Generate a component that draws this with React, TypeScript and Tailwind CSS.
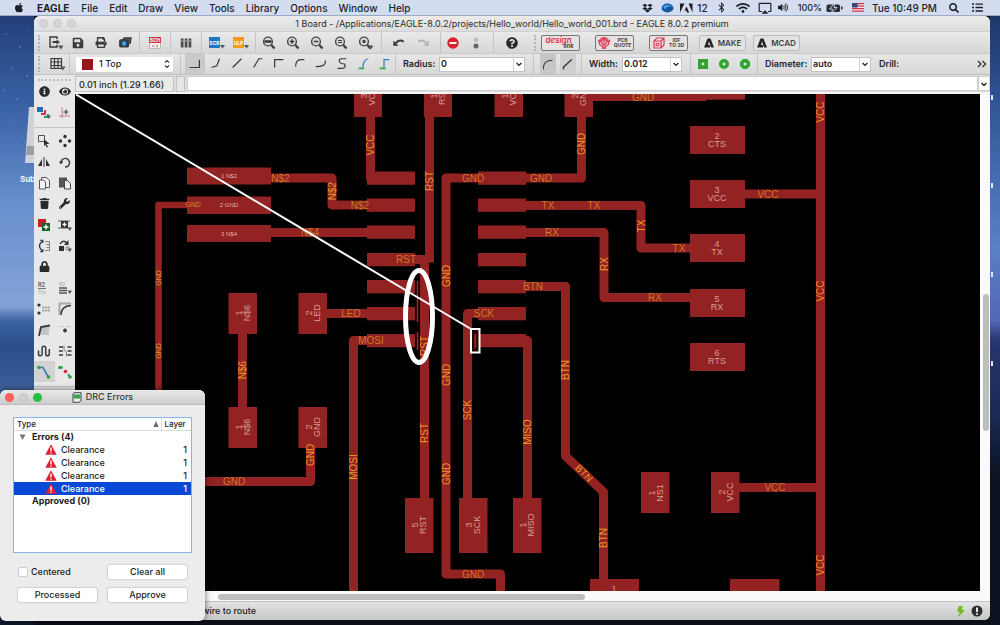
import React from "react";
import {
  FaApple, FaDropbox, FaBluetoothB, FaWifi, FaTrash, FaWrench, FaLock, FaInfoCircle, FaEye,
  FaQuestionCircle, FaPrint, FaVolumeUp, FaSearch, FaBolt, FaListUl, FaSave,
} from "react-icons/fa";
import { MdAirplay } from "react-icons/md";

type Kids = { children?: React.ReactNode };

/* ---------- small drawing helpers ---------- */

function Glyph({ children, size = "w-4 h-4", box = "0 0 16 16" }: Kids & { size?: string; box?: string }) {
  return (
    <svg viewBox={box} className={`${size} shrink-0`} fill="none" stroke="#3a3a3a" strokeWidth="1.4" aria-hidden="true">
      {children}
    </svg>
  );
}

const Drop = () => <path d="M11 10.500h5.500l-2.700 4z" fill="#555" stroke="none" />;

function Tool({ label, children, cell = "w-6" }: Kids & { label: string; cell?: string }) {
  return (
    <button type="button" aria-label={label} className={`${cell} flex h-5 shrink-0 items-center justify-center`}>
      {children}
    </button>
  );
}

function Group({ children, className = "" }: Kids & { className?: string }) {
  return (
    <div className={`flex h-full shrink-0 items-center border-l border-[#c4c4c4] ${className}`}>{children}</div>
  );
}

const Grip = () => (
  <div className="mx-1 h-4 shrink-0 border-l-2 border-dotted border-[#b4b4b4]" />
);

function Magnifier({ children, drop }: Kids & { drop?: boolean }) {
  return (
    <Glyph>
      <circle cx="7" cy="6.5" r="4.4" fill="#d8d8d8" stroke="#4a4a4a" />
      <path d="M10.300 10l3.200 3.400" strokeWidth="2.200" />
      {children}
      {drop && <Drop />}
    </Glyph>
  );
}

function Combo({ id, value, width }: { id: string; value: string; width: string }) {
  return (
    <div className={`${width} relative h-[15px] shrink-0 border border-[#c3c3c3] bg-white`}>
      <select id={id} defaultValue={value} className="block h-full w-full appearance-none bg-transparent pl-px text-[9px] leading-3 text-[#222] outline-none">
        <option>{value}</option>
      </select>
      <span className="pointer-events-none absolute inset-y-0 right-0 flex w-[11px] items-center justify-center border-l border-[#d5d5d5] bg-white">
        <svg viewBox="0 0 8 8" className="h-2 w-2" fill="none" stroke="#222" strokeWidth="1.3"><path d="M1.6 3l2.400 2.400L6.400 3" /></svg>
      </span>
    </div>
  );
}

/* ---------- menu bar ---------- */

const menus = ["File", "Edit", "Draw", "View", "Tools", "Library", "Options", "Window", "Help"];

function MenuBar() {
  return (
    <header className="flex h-4 shrink-0 items-center border-b border-[#9da8c4] bg-[#d4ddf0] pr-4 pl-[14px] text-[10px] leading-4 font-medium text-[#1c1f28]">
      <FaApple className="mr-[13px] h-[11px] w-[10px] shrink-0" />
      <nav className="flex items-center gap-[11px]">
        <button type="button" className="mr-px font-bold">EAGLE</button>
        {menus.map((m) => <button type="button" key={m}>{m}</button>)}
      </nav>
      <div className="ml-auto flex items-center">
        <FaDropbox className="mr-2 h-[10px] w-[11px]" />
        <svg viewBox="0 0 13 10" className="mr-[6px] h-[10px] w-[13px]">
          <ellipse cx="6.5" cy="5" rx="6" ry="4.4" fill="#16579f" />
          <path d="M2 4Q6 0 11 3.500Q6 2.500 4 6.500Z" fill="#4aa1e6" />
        </svg>
        <svg viewBox="0 0 13 10" className="mr-1 h-[10px] w-[13px]" fill="#1c1f28"><path d="M0 9.500V.5h4.500zM8.500.5H12.500v9zM6.500 3.500l2.700 6H7l-.8-2H4.500z" /></svg>
        <span>12</span>
        <FaBluetoothB className="ml-2 h-[11px] w-[11px]" />
        <FaWifi className="ml-[9px] h-[12px] w-[14px]" />
        <MdAirplay className="ml-2 h-[14px] w-[14px]" />
        <FaVolumeUp className="ml-[6px] h-[9px] w-[10px]" />
        <span className="ml-[10px] text-[9px]">100%</span>
        <svg viewBox="0 0 17 10" className="ml-1 h-[10px] w-[17px]">
          <rect x=".5" y="1.500" width="13.500" height="7.500" rx="1.500" fill="#2a2d36" />
          <path d="M15 3.500h1.500v3H15z" fill="#2a2d36" />
          <path d="M8.500 0L3.500 6h3L5.500 10 11 4.500H8z" fill="#2a2d36" stroke="#d4ddf0" strokeWidth=".9" />
        </svg>
        <svg viewBox="0 0 12 9" className="ml-[9px] h-[9px] w-3">
          <path d="M0 0h12v9H0z" fill="#f3e4e6" />
          <path d="M0 .7h12M0 3.200h12M0 5.700h12M0 8.200h12" stroke="#c9394a" strokeWidth="1.300" />
          <path d="M0 0h5.500v4.500H0z" fill="#39477f" />
        </svg>
        <span className="ml-2">Tue 10:49 PM</span>
        <FaSearch className="ml-3 h-[10px] w-[10px]" />
        <FaListUl className="ml-3 h-[11px] w-[13px]" />
      </div>
    </header>
  );
}

/* ---------- toolbars ---------- */

function ActionBar() {
  return (
    <div className="flex h-[22px] shrink-0 items-center border-b border-[#c9c9c9] bg-linear-to-b from-[#e9e9e9] to-[#d6d6d6]">
      <Grip />
      <Tool label="Open" cell="w-[22px]">
        <Glyph><path d="M10 4V2H3v10h7v-2" /><path d="M5.500 7h5" strokeWidth="1.800" /><path d="M9.500 4.500L13 7l-3.500 2.500z" fill="#3a3a3a" stroke="none" /><Drop /></Glyph>
      </Tool>
      <Tool label="Save" cell="w-[23px]"><FaSave className="h-3 w-3 text-[#3a3a3a]" /></Tool>
      <Tool label="Print"><FaPrint className="h-[11px] w-3 text-[#3a3a3a]" /></Tool>
      <Tool label="CAM">
        <Glyph size="h-[14px] w-[14px]"><path d="M5 5l2-3h8l-1 7" fill="#555" /><rect x="2" y="4.500" width="10" height="8" rx="1" fill="#2d3c4a" /><circle cx="7" cy="8.500" r="2.500" fill="#39a4e2" stroke="none" /></Glyph>
      </Tool>
      <Group className="ml-[2px] w-[31px] justify-center">
        <Tool label="Schematic">
          <svg viewBox="0 0 12 12" className="h-3 w-3">
            <path d="M.5 .5h11v11H.5z" fill="#f1eeee" stroke="#b9b9b9" />
            <path d="M0 0h12v6H0z" fill="#cc2f3d" />
            <text x="6" y="5" textAnchor="middle" fontSize="5" fontWeight="700" fill="#fff">SCH</text>
            <path d="M3 9h2.500M8 7.500v3" stroke="#c56a70" />
          </svg>
        </Tool>
      </Group>
      <Group className="w-[31px] justify-center">
        <Tool label="Libraries">
          <Glyph size="h-3 w-3" box="0 0 12 12"><path d="M.8 1.500h2.700v9H.8zM4.700 1.500h2.700v9H4.700zM8.600 1.500h2.700v9H8.600z" fill="#4c4c4c" stroke="none" /><path d="M1.500 4h1.300M5.400 4h1.300M9.300 4h1.300" stroke="#ddd" strokeWidth="1" /></Glyph>
        </Tool>
      </Group>
      <Group className="w-[54px] pl-[3px]">
        <Tool label="Script">
          <svg viewBox="0 0 16 13" className="h-[13px] w-4">
            <path d="M0 1h11v11H0z" fill="#1f78c4" />
            <text x="5.500" y="8.500" textAnchor="middle" fontSize="5" fontWeight="700" fill="#fff">SCR</text>
            <path d="M11 9h5l-2.500 3.500z" fill="#555" />
          </svg>
        </Tool>
        <Tool label="ULP">
          <svg viewBox="0 0 16 13" className="h-[13px] w-4">
            <path d="M0 1h11v11H0z" fill="#f59a1c" />
            <text x="5.500" y="8.500" textAnchor="middle" fontSize="5" fontWeight="700" fill="#fff">ULP</text>
            <path d="M11 9h5l-2.500 3.500z" fill="#555" />
          </svg>
        </Tool>
      </Group>
      <Group className="w-[126px] justify-between pr-1 pl-px">
        <Tool label="Zoom to fit"><Magnifier><path d="M3.500 6.500h7" strokeWidth="2.500" /></Magnifier></Tool>
        <Tool label="Zoom in"><Magnifier><path d="M4.800 6.500h4.400M7 4.300v4.400" /></Magnifier></Tool>
        <Tool label="Zoom out"><Magnifier><path d="M4.800 6.500h4.400" /></Magnifier></Tool>
        <Tool label="Redraw"><Magnifier><path d="M5 5.500h4M5 7.500h4" strokeWidth="1" /></Magnifier></Tool>
        <Tool label="Zoom select"><Magnifier drop><circle cx="7" cy="6.500" r="1" /></Magnifier></Tool>
      </Group>
      <Group className="w-[59px] justify-center">
        <Tool label="Undo"><Glyph size="h-[14px] w-[14px]"><path d="M4 8.500Q8 3 13.500 6.500" strokeWidth="2.200" /><path d="M1.500 5v6h6z" fill="#3a3a3a" stroke="none" /></Glyph></Tool>
        <Tool label="Redo"><Glyph size="h-[14px] w-[14px]"><path d="M12 8.500Q8 3 2.500 6.500" stroke="#b5b5b5" strokeWidth="2" /><path d="M14.500 5v6h-6z" fill="#b5b5b5" stroke="none" /></Glyph></Tool>
      </Group>
      <Group className="w-[53px]">
        <Tool label="Stop"><svg viewBox="0 0 12 12" className="h-3 w-3"><circle cx="6" cy="6" r="5.700" fill="#d9202f" /><path d="M2.500 6h7" stroke="#fff" strokeWidth="2.200" /></svg></Tool>
        <Tool label="Go" cell="w-[21px]"><svg viewBox="0 0 6 12" className="h-3 w-[6px]"><circle cx="3" cy="3" r="2.300" fill="#bbb" /><circle cx="3" cy="9" r="2.500" fill="#666" /></svg></Tool>
      </Group>
      <Group className="w-[37px] justify-center">
        <Tool label="Help"><FaQuestionCircle className="h-3 w-3 text-[#2b2b2b]" /></Tool>
      </Group>
      <Grip />
      <button type="button" className="ml-px flex h-4 w-[39px] shrink-0 flex-col items-center justify-center rounded-xs border border-[#777] bg-[#e6e2e2] text-[8px] leading-[6px] font-semibold italic">
        <span className="-ml-1 text-[#e02f49]">design</span>
        <span className="ml-4 text-[6px] text-[#333]">link</span>
      </button>
      <button type="button" className="ml-[15px] flex h-4 w-[39px] shrink-0 items-center justify-center gap-1 rounded-xs border border-[#777] bg-[#e6e2e2] text-[5px] leading-[5px] font-bold text-[#444]">
        <svg viewBox="0 0 12 12" className="h-3 w-3" stroke="#dd3752" fill="none" strokeWidth="1.200"><path d="M1.500 5v2.500l3 2V12M10.500 5v2.500l-3 2V12M6 2v10M3.800 3v3.500L5 8M8.200 3v3.500L7 8" /><circle cx="1.500" cy="4" r="1" /><circle cx="10.500" cy="4" r="1" /><circle cx="3.800" cy="2" r="1" /><circle cx="8.200" cy="2" r="1" /><circle cx="6" cy="1.200" r=".8" /></svg>
        <span>PCB<br />QUOTE</span>
      </button>
      <button type="button" className="ml-[15px] flex h-4 w-[39px] shrink-0 items-center justify-center gap-1 rounded-xs border border-[#777] bg-[#e6e2e2] text-[5px] leading-[5px] font-bold text-[#444]">
        <svg viewBox="0 0 12 12" className="h-3 w-3" stroke="#dd3752" fill="none" strokeWidth="1.200"><path d="M1 4l3-3h7v7l-3 3H1zM1 4h7v7M8 4l3-3" /><circle cx="4.500" cy="7.500" r="1.500" /></svg>
        <span>IDF<br />TO 3D</span>
      </button>
      {["MAKE", "MCAD"].map((name) => (
        <button key={name} type="button" className="mr-[-4px] ml-[11px] flex h-4 w-[47px] shrink-0 items-center justify-center gap-1 rounded-xs border border-[#bcbcbc] bg-[#e3e3e3] text-[8px] leading-3 font-semibold text-[#444]">
          <svg viewBox="0 0 10 10" className="h-[10px] w-[10px]" fill="#262626"><path d="M0 9.500L3.500.5h3L10 9.500H7L5 3.500 4 7h2v2.500z" /></svg>
          {name}
        </button>
      ))}
    </div>
  );
}

const bends = [
  "M13 3v9H2", "M12 2L9 10l-6 2", "M13 2L3 12", "M13 2H9L3 12", "M13 3H3v9",
  "M13 3H9Q3 3 3 11", "M13 4v2Q13 11 2 11",
];

function ParameterBar() {
  return (
    <div className="flex h-[21px] shrink-0 items-center overflow-hidden border-b border-[#c2c2c2] bg-linear-to-b from-[#e6e6e6] to-[#d8d8d8] text-[9px] font-semibold text-[#262626]">
      <Grip />
      <Tool label="Grid" cell="w-[25px]">
        <Glyph><path d="M2 2.500h10.500v10H2zM5.500 2.500v10M9 2.500v10M2 6h10.500M2 9.500h10.500" strokeWidth="1.200" /><Drop /></Glyph>
      </Tool>
      <Group className="w-[111px] pl-[6px]">
        <div className="relative flex h-[15px] w-[97px] items-center rounded-xs bg-white shadow-xs">
          <span className="ml-[6px] h-[11px] w-[11px] bg-[#97181b]" />
          <select aria-label="Layer" defaultValue="1 Top" className="ml-1.5 min-w-0 flex-1 appearance-none bg-transparent text-[9px] leading-3 font-medium outline-none">
            <option>1 Top</option>
          </select>
          <svg viewBox="0 0 6 10" className="pointer-events-none absolute right-[3px] h-[10px] w-[6px]" fill="none" stroke="#333" strokeWidth="1.100"><path d="M1 3.500l2-2 2 2M1 6.500l2 2 2-2" /></svg>
        </div>
      </Group>
      <Group className="w-[215px] pl-1">
        {bends.map((d, i) => (
          <Tool key={d} label={`Bend ${i}`} cell={i === 0 ? "w-5 bg-[#c9c9c9]" : "w-[21px]"}><Glyph size="h-[14px] w-[14px]"><path d={d} /></Glyph></Tool>
        ))}
        <Tool label="Bend 7" cell="w-[21px]"><Glyph size="h-[14px] w-[14px]"><path d="M13 2H8Q4 2 5 5T11 8Q13 13 8 13H3" /></Glyph></Tool>
        <Tool label="Bend 8" cell="w-[21px]"><Glyph size="h-[14px] w-[14px]"><path d="M14 2Q8 3 8 12" stroke="#2f7fc2" /><path d="M3 13h6" stroke="#3aa54a" strokeWidth="2" /></Glyph></Tool>
        <Tool label="Bend 9" cell="w-[21px]"><Glyph size="h-[14px] w-[14px]"><path d="M14 3H8v9" stroke="#2f7fc2" /><path d="M3 13h7" stroke="#3aa54a" strokeWidth="2" /></Glyph></Tool>
      </Group>
      <Group className="w-[138px] gap-1 pl-[7px]">
        <label htmlFor="radius" className="w-8">Radius:</label>
        <Combo id="radius" value="0" width="w-[86px]" />
      </Group>
      <Group className="w-12 gap-1 pl-[6px]">
        <Tool label="Round miter" cell="w-4 bg-[#c6c6c6]"><Glyph size="h-3 w-3"><path d="M2 15V12Q3 3 14 3" /></Glyph></Tool>
        <Tool label="Straight miter" cell="w-4 bg-[#cfcfcf]"><Glyph size="h-3 w-3"><path d="M2 15v-3L13 2" strokeWidth="2" /></Glyph></Tool>
      </Group>
      <Group className="w-[109px] gap-1 pl-[7px]">
        <label htmlFor="width" className="w-[29px]">Width:</label>
        <Combo id="width" value="0.012" width="w-[60px]" />
      </Group>
      <Group className="w-[67px] pl-px">
        <Tool label="Square via" cell="w-[21px]"><svg viewBox="0 0 10 10" className="h-[10px] w-[10px]"><path d="M0 0h10v10H0z" fill="#2fa52d" /><circle cx="5" cy="5" r="1.400" fill="#dff0df" /></svg></Tool>
        <Tool label="Round via" cell="w-[21px]"><svg viewBox="0 0 10 10" className="h-[10px] w-[10px]"><circle cx="5" cy="5" r="5" fill="#2fa52d" /><circle cx="5" cy="5" r="1.500" fill="#dff0df" /></svg></Tool>
        <Tool label="Octagon via" cell="w-[21px]"><svg viewBox="0 0 10 10" className="h-[10px] w-[10px]"><path d="M3 0h4l3 3v4l-3 3H3L0 7V3z" fill="#2fa52d" /><circle cx="5" cy="5" r="1.500" fill="#dff0df" /></svg></Tool>
      </Group>
      <Group className="gap-1 pl-[7px]">
        <label htmlFor="diameter" className="w-[42px]">Diameter:</label>
        <Combo id="diameter" value="auto" width="w-[60px]" />
      </Group>
      <span className="ml-2">Drill:</span>
      <button type="button" aria-label="More" className="mr-[3px] ml-auto">
        <Glyph size="h-[10px] w-[10px]" box="0 0 10 10"><path d="M1 2l3 3-3 3M5.500 2l3 3-3 3" /></Glyph>
      </button>
    </div>
  );
}

/* ---------- left palette ---------- */

const dk = "#303030";
const P = ({ children }: Kids) => <Glyph size="h-[14px] w-[14px]" box="0 0 14 14">{children}</Glyph>;
const Tri = () => <path d="M9.500 9.500h4.500l-2.200 3.500z" fill="#555" stroke="none" />;

const paletteTop: [string, React.ReactNode][] = [
  ["Info", <FaInfoCircle className="h-[11px] w-[11px]" />],
  ["Show", <FaEye className="h-[11px] w-[12px]" />],
  ["Layers", <P><path d="M0 1h6v5H0z" fill="#1f6fbf" stroke="none" /><path d="M4 8h4V4" stroke="#d0305a" strokeWidth="2" /><path d="M7 11h4V8" stroke="#2f9f5a" strokeWidth="2" /><Tri /></P>],
  ["Mark", <P><path d="M4 1v11M1 10h11" stroke="#c06a6a" strokeWidth=".8" /><path d="M8 3.500v5M5.500 6h5" strokeWidth="1.200" /></P>],
];

const palette: [string, React.ReactNode][] = [
  ["Select", <P><path d="M1.500 1.500h6v6h-6z" stroke="#555" strokeWidth="1" /><path d="M7 5l5.500 5H9.500l1.500 3-1.500.5-1.200-3L7 12z" fill={dk} stroke="none" /></P>],
  ["Move", <P><g fill={dk} stroke="none"><circle cx="7" cy="2.500" r="1.700" /><circle cx="7" cy="11.500" r="1.700" /><circle cx="2.500" cy="7" r="1.700" /><circle cx="11.500" cy="7" r="1.700" /></g></P>],
  ["Mirror", <P><path d="M7 2v10" strokeWidth="1" /><path d="M5 4v7H1zM9 4v7h4z" fill={dk} stroke="none" /></P>],
  ["Rotate", <P><path d="M3 8a4.300 4.300 0 1 1 4 4" /><path d="M.8 6.500h4.500L3 9.500z" fill={dk} stroke="none" /></P>],
  ["Copy", <P><path d="M4.500 1.500h5l3 3v7h-8z" fill="#eee" stroke="#555" strokeWidth="1" /><path d="M2.500 4h4l2 2v7h-6z" fill="#f4f4f4" stroke="#555" strokeWidth="1" /></P>],
  ["Paste", <P><path d="M1 1.500h8v10H1z" fill="#555" stroke="none" /><path d="M6.500 4.500h3l3 3v5.500h-6z" fill="#eee" stroke="#444" strokeWidth="1" /></P>],
  ["Delete", <FaTrash className="h-[11px] w-[11px]" />],
  ["Change", <FaWrench className="h-[11px] w-[11px]" />],
  ["Add", <P><path d="M1 1h8v8H1z" fill="#c6202f" stroke="none" /><path d="M5 5h8v8H5z" fill="#1d5b27" stroke="none" /><path d="M9 6.500v5M6.500 9h5" stroke="#fff" /></P>],
  ["Replace", <P><path d="M3 3h7v7H3z" fill={dk} stroke="none" /><path d="M0 3h12M0 10h12" strokeWidth=".8" /><path d="M6.500 4.500v4M4.500 6.500h4" stroke="#fff" /><Tri /></P>],
  ["Pinswap", <P><path d="M4.500 3Q.5 7 4.500 11" /><path d="M3.500 1.200h2.500v2.500zM3.500 12.800h2.500v-2.500z" fill={dk} strokeWidth="1" /><path d="M8 2.500h4.500M9.500 5.500h3M9.500 8.500h3M8 11.500h4.500M12.500 2v10" stroke="#888" strokeWidth="1" /></P>],
  ["Gateswap", <P><path d="M2 5Q5 0 9 4" /><path d="M10.500 1v5H6z" fill={dk} stroke="none" /><path d="M1 7h5v5H1z" fill={dk} stroke="none" /><path d="M8 8h3v3H8z" stroke="#888" strokeWidth="1" /><Tri /></P>],
  ["Lock", <FaLock className="h-[11px] w-[11px]" />],
  ["", null],
  ["Name", <P><text x="1" y="5.500" fontSize="5.500" fontWeight="700" fill="#666" stroke="none">R2</text><path d="M1 7.500h8" strokeWidth="1" stroke="#777" /><text x="1" y="13" fontSize="5" fill="#aaa" stroke="none">10k</text></P>],
  ["Value", <P><text x="1" y="5" fontSize="5" fill="#aaa" stroke="none">R2</text><path d="M1 7h8M1 9.500h8M1 12h8" strokeWidth="1.300" stroke="#555" /><Tri /></P>],
  ["Smash", <P><circle cx="2" cy="3" r="1.600" fill={dk} stroke="none" /><circle cx="2" cy="11" r="1.600" fill={dk} stroke="none" /><path d="M5 5.500h8M5 8.500h8M6 4v6M9 4v6M12 4v6" stroke="#aaa" strokeWidth="1" /></P>],
  ["Miter", <P><path d="M1.500 13V1.500H13" stroke="#aaa" strokeWidth="2" /><path d="M3 13Q3 4 13 3.500" /></P>],
  ["Split", <P><path d="M4 4h8v8H4z" fill="#c4c4c4" stroke="none" /><path d="M2 13L4 4l9-1.500" strokeWidth="1.800" /></P>],
  ["Optimize", <P><path d="M1 3.500h5M8 3.500h5" stroke="#bbb" strokeWidth=".8" /><path d="M7 5.500v4M5 7.500h4" strokeWidth="1.800" /></P>],
  ["Meander", <P><path d="M1.500 6.500V10a1.800 1.800 0 0 0 3.600 0V4a1.800 1.800 0 0 1 3.600 0v6a1.800 1.800 0 0 0 3.600 0V5" strokeWidth="1.500" /></P>],
  ["Route tools", <P><path d="M1 3h4M1 7h4M1 11h4M9.500 3h4M9.500 7h4M9.500 11h4" strokeWidth="1.400" /><path d="M6 1.500v4l2.500 3v4" stroke="#777" strokeWidth="1" /></P>],
  ["Route", <P><path d="M1 2.500h5l5 9" stroke="#3b7cc0" strokeWidth="1.600" /><circle cx="2" cy="2.500" r="1.800" fill="#2fa14a" stroke="none" /><circle cx="11.500" cy="12" r="1.800" fill="#2fa14a" stroke="none" /></P>],
  ["Ripup", <P><path d="M1 2.500h4M10 9l2 3" stroke="#2fa14a" strokeWidth="2" /><circle cx="2" cy="2.500" r="1.800" fill="#2fa14a" stroke="none" /><circle cx="12" cy="12" r="1.800" fill="#2fa14a" stroke="none" /><circle cx="7.500" cy="6.500" r="1.800" fill="#d22a3a" stroke="none" /></P>],
];

function Palette() {
  const cell = (name: string, icon: React.ReactNode, i: number) =>
    icon ? (
      <button key={name} type="button" aria-label={name} className={name === "Route" ? "flex h-[21px] items-center justify-center bg-[#d2d2d2]" : "flex h-[21px] items-center justify-center"}>
        {icon}
      </button>
    ) : <span key={i} />;
  return (
    <aside className="w-[41px] shrink-0 overflow-hidden bg-[#e8e8e8] text-[#2b2b2b]">
      <div className="mx-1 mt-1 border-t-2 border-dotted border-[#bdbdbd]" />
      <div className="grid grid-cols-2 border-b border-[#c6c6c6] pb-1">{paletteTop.map(([n, ic], i) => cell(n, ic, i))}</div>
      <div className="grid grid-cols-2 border-b border-[#c6c6c6] pt-0.5 pb-1">{palette.map(([n, ic], i) => cell(n, ic, i))}</div>
    </aside>
  );
}

/* ---------- board drawing ---------- */

const COPPER = "#932222";

// x, y, width, height
const pads: number[][] = [
  [354, 90, 28, 27], [424, 90, 28, 27], [494.5, 90, 28.5, 27], [564.5, 90, 28.5, 27],
  [187, 167.5, 84, 17], [187, 196.5, 84, 17.5], [187, 225, 84, 17],
  [228.5, 293, 28.5, 41], [298.5, 293, 28.5, 41], [228.5, 407, 28.5, 41], [298.5, 407, 28.5, 41],
  [405, 498, 28.5, 55], [459, 498, 28.5, 55], [513, 498, 28.5, 55],
  [641, 472, 28.5, 41], [711, 472, 28.5, 41], [590, 579, 49, 14], [730, 579, 49.5, 14],
  ...[126, 180, 234, 289, 343].map((y) => [690, y, 55, 28]),
  ...[171.5, 198.5, 225.5, 253, 280, 307, 334].flatMap((y) => [[367, y, 48, 13.3], [478, y, 48, 13.3]]),
];

const traces = [
  "M370.500 110V178H380", "M429.500 110V262.500", "M400 259.500H429", "M424.500 262V500",
  "M271 178H332V205H370", "M271 232.500H370",
  "M480 178H446V574H500.500V595", "M520 178H581.500V110", "M590 96.500H706",
  "M520 205.500H641V248H692", "M520 232.500H604V297.500H692",
  "M520 286.500H565.500V456L603.500 492V582", "M820.500 90V595", "M745 194H820", "M739 487.500H820",
  "M242.500 330V410", "M327 313.500H370", "M310.500 445V481.500H190",
  "M370 340.500H353.500V595", "M480 313.500H467.500V500", "M520 340.500H527.500V500",
];

// text, centre x, centre y, rotation
const nets: [string, number, number, number][] = [
  ["VCC", 370.5, 145, -90], ["RST", 429.5, 181, -90], ["N$2", 280.5, 178, 0], ["N$2", 332, 191, -90],
  ["N$2", 360, 205, 0], ["N$4", 310, 232, 0], ["RST", 406, 259, 0],
  ["GND", 446, 276, -90], ["GND", 473, 178, 0], ["GND", 541, 178, 0], ["GND", 581.5, 144, -90],
  ["GND", 643, 97, 0], ["TX", 548, 205, 0], ["TX", 594, 205, 0], ["TX", 641, 226, -90], ["TX", 679, 248, 0],
  ["RX", 552, 232, 0], ["RX", 604, 264, -90], ["RX", 655, 297, 0], ["BTN", 533, 286, 0],
  ["VCC", 820.5, 112, -90], ["VCC", 768, 194, 0], ["VCC", 820.5, 291, -90], ["VCC", 820.5, 565, -90],
  ["VCC", 775, 487, 0], ["BTN", 565.5, 370, -90], ["BTN", 584, 473, 45], ["BTN", 603.5, 538, -90],
  ["LED", 351, 313, 0], ["MOSI", 371, 340, 0], ["SCK", 484, 313, 0], ["N$6", 242.5, 370, -90],
  ["RST", 424.5, 346, -90], ["RST", 424.5, 433, -90], ["GND", 446, 375, -90], ["GND", 446, 474, -90],
  ["SCK", 467.5, 410, -90], ["MISO", 527.5, 432, -90], ["MOSI", 353.5, 467, -90],
  ["GND", 310.5, 455, -90], ["GND", 234, 481, 0], ["GND", 473, 574, 0],
];

// number, name, centre x, centre y, rotation
const padNames: [string, string, number, number, number][] = [
  ["2", "CTS", 717, 139, 0], ["3", "VCC", 717, 193, 0], ["4", "TX", 717, 247, 0], ["5", "RX", 717, 302, 0], ["6", "RTS", 717, 356, 0],
  ["3", "VCC", 367, 96, -90], ["1", "RST", 437, 96, -90], ["1", "VCC", 508, 96, -90], ["2", "GND", 578, 96, -90],
  ["1", "N$6", 242, 313, -90], ["2", "LED", 312, 313, -90], ["1", "N$6", 242, 427, -90], ["2", "GND", 312, 427, -90],
  ["5", "RST", 418, 525, -90], ["3", "SCK", 472, 525, -90], ["1", "MISO", 526, 525, -90],
  ["1", "NS1", 655, 493, -90], ["2", "VCC", 725, 492, -90], ["1", "", 614, 592, 0],
];

function Board() {
  return (
    <svg viewBox="75 94 905 497" preserveAspectRatio="xMinYMin slice" className="block h-full w-full bg-black font-['Liberation_Sans',sans-serif]" role="img" aria-label="Board layout">
      <g fill="none" stroke={COPPER} strokeWidth="9" strokeLinejoin="round">
        {traces.map((d) => <path key={d} d={d} />)}
        <path d="M190 205H158.500V400" strokeWidth="6.600" />
        <path d="M700 96H745" strokeWidth="7.500" />
      </g>
      <g fill={COPPER}>
        {pads.map(([x, y, w, h], i) => <rect key={i} x={x} y={y} width={w} height={h} />)}
      </g>
      <path d="M415 270h5v80h-5z" fill="#000" />
      <path d="M417.500 281V322M417.500 332V350" stroke="#c81a1a" strokeWidth="1.500" />
      <g textAnchor="middle" fontSize="10">
        {nets.map(([t, x, y, r], i) => (
          <text key={i} transform={`translate(${x} ${y}) rotate(${r})`} y="3.500" fill={r ? "#eb9622" : "#cb7822"}>{t}</text>
        ))}
        {["GND", "GND"].map((t, i) => (
          <text key={i} transform={`translate(158.500 ${278 + i * 73}) rotate(-90)`} y="2.500" fontSize="7" fill="#eb9622">{t}</text>
        ))}
        <text x="193" y="207" fontSize="7" fill="#dd8a20">GND</text>
      </g>
      <g textAnchor="middle" fontSize="9" fill="#d79c9c">
        {padNames.map(([n, t, x, y, r], i) => (
          <g key={i} transform={`translate(${x} ${y}) rotate(${r})`}><text y="0">{n}</text><text y="7.500">{t}</text></g>
        ))}
      </g>
      <g textAnchor="middle" fontSize="6" fill="#e0b0b0">
        <text x="229" y="178">1 N$2</text><text x="229" y="207">2 GND</text><text x="229" y="236">3 N$4</text>
      </g>
      <g fill="none" stroke="#fff">
        <path d="M76 94.500L471 329" strokeWidth="2" />
        <ellipse cx="419" cy="316.500" rx="13.500" ry="46" strokeWidth="5" />
        <rect x="471" y="329" width="8.500" height="23.500" strokeWidth="2" fill="#2a0808" />
        <path d="M475.300 334v14" stroke="#d01c1c" strokeWidth="1.500" />
      </g>
    </svg>
  );
}

/* ---------- DRC dialog ---------- */

const Warning = () => (
  <svg viewBox="0 0 12 11" className="h-[11px] w-3"><path d="M6 .3L11.700 10.700H.3z" fill="#e01d33" /><path d="M6 3.500v4M6 8.500v1.300" stroke="#fff" strokeWidth="1.400" /></svg>
);

function DrcDialog() {
  const button = "h-[14px] rounded-xs bg-white text-[9px] leading-3 font-medium shadow-[0_0_1px_1px_rgba(0,0,0,0.12)]";
  return (
    <section className="absolute bottom-1 left-0 flex h-[231px] w-[205px] flex-col rounded-md bg-[#ececec] text-[9px] font-medium text-[#1d1d1d] shadow-[0_0_6px_rgba(0,0,0,0.6)]">
      <div className="relative flex h-[15px] shrink-0 items-center justify-center rounded-t-md border-b border-[#bdbdbd] bg-linear-to-b from-[#e8e8e8] to-[#cdcdcd]">
        <div className="absolute left-[5px] flex gap-[5px]">
          <span className="h-[9px] w-[9px] rounded-full bg-[#f9605a]" />
          <span className="h-[9px] w-[9px] rounded-full border border-[#c4c4c4] bg-[#d0d0d0]" />
          <span className="h-[9px] w-[9px] rounded-full bg-[#22c03c]" />
        </div>
        <svg viewBox="0 0 10 11" className="mr-1 h-[11px] w-[10px]"><path d="M2 .7h7v8L7 10.300H1V2z" fill="#e8f0e8" stroke="#444" /><path d="M1.500 2.500h7v4h-7z" fill="#3f9f4a" /></svg>
        <h2 className="text-[9px] text-[#3a3a3a]">DRC Errors</h2>
      </div>
      <div className="mx-[13px] mt-3 h-[136px] shrink-0 border border-[#86b4ee] bg-white">
        <table className="w-full table-fixed border-collapse">
          <thead>
            <tr className="h-3 border-b border-[#dcdcdc] text-left text-[8px] leading-3">
              <th className="pl-[3px] font-medium">
                <span className="flex items-center justify-between pr-[2px]">Type
                  <svg viewBox="0 0 6 6" className="h-[6px] w-[6px]"><path d="M3 0l2.500 6h-5z" fill="#666" /></svg>
                </span>
              </th>
              <th className="w-[30px] border-l border-[#dcdcdc] pl-[3px] font-medium">Layer</th>
            </tr>
          </thead>
          <tbody>
            <tr className="h-3 leading-3 font-bold">
              <td colSpan={2}><span className="flex items-center gap-[6px] pl-[5px]">
                <svg viewBox="0 0 7 6" className="h-[6px] w-[7px]"><path d="M.5.5h6L3.500 6z" fill="#777" /></svg>Errors (4)</span></td>
            </tr>
            {[0, 1, 2, 3].map((i) => (
              <tr key={i} className={i === 3 ? "h-[13px] bg-[#0a49d6] leading-3 text-white" : "h-[13px] leading-3"}>
                <td><span className="flex items-center gap-1 pl-[31px]"><Warning />Clearance</span></td>
                <td className="pr-1 text-right">1</td>
              </tr>
            ))}
            <tr className="h-3 leading-3 font-bold"><td colSpan={2} className="pl-[18px]">Approved (0)</td></tr>
          </tbody>
        </table>
      </div>
      <div className="grid grid-cols-2 gap-x-[11px] gap-y-[9px] pt-3 pr-[18px] pl-[18px]">
        <label className="flex h-[14px] items-center gap-[3px]">
          <input type="checkbox" className="h-[10px] w-[10px] appearance-none rounded-xs border border-[#cfcfcf] bg-white" />Centered
        </label>
        <button type="button" className={button}>Clear all</button>
        <button type="button" className={button}>Processed</button>
        <button type="button" className={button}>Approve</button>
      </div>
    </section>
  );
}

/* ---------- application ---------- */

export default function App() {
  return (
    <div className="relative flex h-screen flex-col overflow-hidden bg-[#0a0f18] font-['Inter',sans-serif]">
      <MenuBar />
      <div className="flex min-h-0 flex-1">
        <div className="w-[34px] shrink-0 overflow-hidden bg-[linear-gradient(to_bottom,#234079_0px,#3961a5_90px,#6990cf_190px,#83a3d6_290px,#3c62a4_305px,#2a4e8b_330px,#3d5f9a_375px,#101a2c_400px)]">
          <svg viewBox="0 0 34 200" className="h-[200px] w-[34px]">
            <g fill="#a9c2ea" opacity=".6"><circle cx="6" cy="18" r=".7" /><circle cx="20" cy="31" r=".8" /><circle cx="12" cy="52" r=".7" /><circle cx="27" cy="60" r=".8" /><circle cx="4" cy="74" r=".7" /><circle cx="17" cy="83" r=".8" /><circle cx="10" cy="104" r=".7" /><circle cx="22" cy="120" r=".6" /><circle cx="29" cy="14" r=".6" /></g>
            <path d="M29 91h6v56H25z" fill="#cfd2d6" /><path d="M27 130h8v9h-9z" fill="#9a9ea5" />
            <text x="20" y="166" fontSize="8" fontWeight="600" fill="#fff">Sub</text>
          </svg>
        </div>
        <main className="mb-[5px] flex min-w-0 flex-1 flex-col overflow-hidden rounded-md bg-[#e2e2e2]">
          <div className="flex h-4 shrink-0 items-center border-b border-[#cfcfcf] bg-linear-to-b from-[#ececec] to-[#dcdcdc]">
            <div className="flex w-12 shrink-0 gap-[5px] pl-[5px]">
              {[0, 1, 2].map((i) => <span key={i} className="h-[9px] w-[9px] rounded-full border border-[#c6c6c6] bg-[#d6d6d6]" />)}
            </div>
            <h1 className="mr-12 flex-1 text-center text-[9px] leading-4 font-normal whitespace-nowrap text-[#2c2c2c]">
              1 Board - /Applications/EAGLE-8.0.2/projects/Hello_world/Hello_world_001.brd - EAGLE 8.0.2 premium
            </h1>
          </div>
          <ActionBar />
          <ParameterBar />
          <div className="flex min-h-0 flex-1">
            <Palette />
            <div className="flex min-w-0 flex-1 flex-col">
              <div className="flex h-[19px] shrink-0 items-start border-b-2 border-[#f4f4f4] bg-[#dcdcdc] pt-px">
                <output className="h-4 w-[99px] shrink-0 border border-[#c2c2c2] bg-[#ebebeb] pl-[3px] text-[9px] leading-4 font-medium whitespace-nowrap text-[#262626]">0.01 inch (1.29 1.66)</output>
                <span className="mx-[2px] h-4 w-[9px] shrink-0 border border-[#c2c2c2] bg-[#e6e6e6]" />
                <input aria-label="Command" className="h-[15px] min-w-0 flex-1 border border-[#cfcfcf] bg-white text-[10px] outline-none" />
                <button type="button" aria-label="History" className="flex h-[15px] w-3 items-center justify-center border border-[#cfcfcf] bg-white">
                  <Glyph size="h-2 w-2" box="0 0 8 8"><path d="M1.600 3l2.400 2.400L6.400 3" stroke="#222" /></Glyph>
                </button>
              </div>
              <div className="flex min-h-0 flex-1">
                <div className="min-w-0 flex-1 overflow-hidden"><Board /></div>
                <div className="w-[10px] shrink-0 bg-[#fafafa] pt-[200px] pl-[3px]"><div className="h-[137px] w-[6px] rounded-full bg-[#bdbdbd]" /></div>
              </div>
              <div className="h-[10px] shrink-0 bg-[#fafafa] pt-[3px] pl-[143px]"><div className="h-[6px] w-[367px] rounded-full bg-[#bdbdbd]" /></div>
            </div>
          </div>
          <footer className="flex h-[19px] shrink-0 items-center border-t border-[#c2c2c2] bg-linear-to-b from-[#e4e4e4] to-[#c6c6c6] pr-[7px] pl-[168px] text-[9px] font-medium text-[#222]">
            <span>wire to route</span>
            <FaBolt className="mr-1.5 ml-auto h-[11px] w-[9px] rotate-12 text-[#72b81e]" />
            <svg viewBox="0 0 12 12" className="h-3 w-3"><circle cx="6" cy="6" r="5.500" fill="#2e2e2e" /><path d="M6 2.500v4.500M6 8.200v1.600" stroke="#fff" strokeWidth="1.800" /></svg>
          </footer>
        </main>
        <div className="w-[10px] shrink-0 bg-[linear-gradient(to_bottom,#1d3769_0px,#34599b_100px,#5a80c4_230px,#5266b4_305px,#26366f_325px,#1a2a55_400px,#0b1220_460px)]">
          <svg viewBox="0 0 10 420" className="h-[420px] w-[10px]" fill="#dfe6f2"><path d="M1 79h2v5H1zM1 167h2v5H1zM1 256h2v5H1zM1 345h2v5H1z" /></svg>
        </div>
      </div>
      <DrcDialog />
    </div>
  );
}
